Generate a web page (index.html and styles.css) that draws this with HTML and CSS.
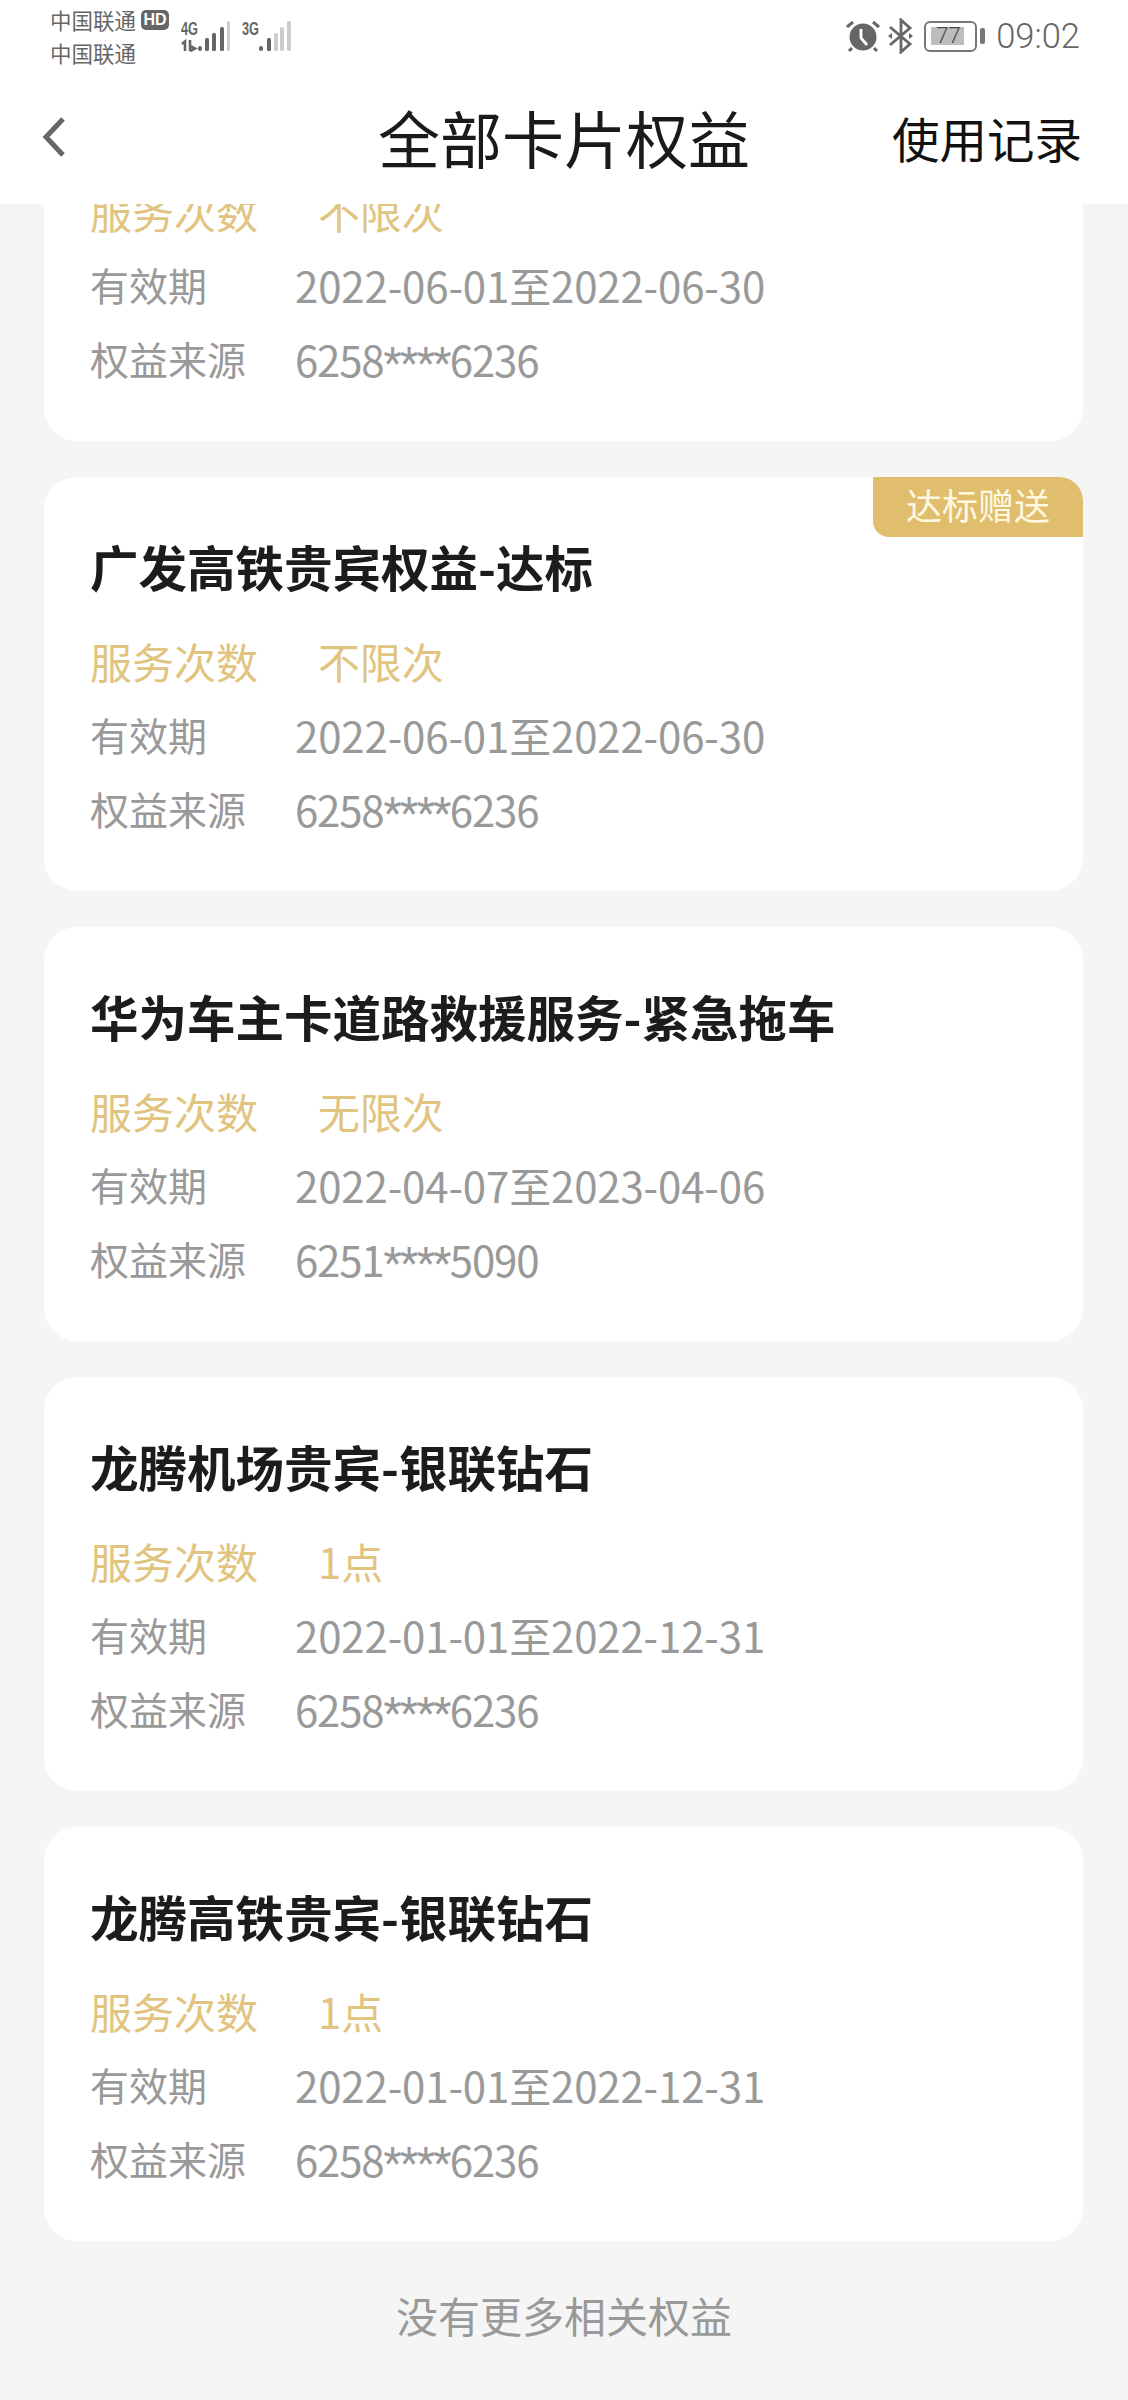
FILE: index.html
```html
<!DOCTYPE html>
<html lang="zh-CN">

<head>
    <meta charset="UTF-8">
    <meta name="viewport" content="width=device-width, initial-scale=1.0">
    <title>全部卡片权益</title>
    <link rel="stylesheet" href="styles.css">
</head>

<body>
    <div class="top">
        <!-- 状态栏 -->
        <div class="status">
            <div class="carrier">
                <div class="carrier-line">中国联通<span class="hd">HD</span></div>
                <div class="carrier-line">中国联通</div>
            </div>
            <svg class="signal" width="50" height="34" viewBox="0 0 50 34">
                <text class="signal-text" x="1" y="15" textLength="17" lengthAdjust="spacingAndGlyphs">4G</text>
                <path d="M2 24l3-2.500V31M10 20v11M10 26l5 2.500-5 2.500" fill="none" stroke="#666" stroke-width="2.600"/>
                <rect x="18" y="26" width="4" height="5" rx="2" fill="#666"/>
                <rect x="25" y="18" width="4" height="13" rx="1.500" fill="#666"/>
                <rect x="32" y="13" width="4" height="18" rx="1.500" fill="#666"/>
                <rect x="40" y="7" width="4" height="24" rx="1.500" fill="#666"/>
                <rect x="47" y="1" width="3" height="30" rx="1.500" fill="#ccc"/>
            </svg>
            <svg class="signal signal-second" width="50" height="34" viewBox="0 0 50 34">
                <text class="signal-text" x="0" y="15" textLength="17" lengthAdjust="spacingAndGlyphs">3G</text>
                <rect x="17" y="26" width="4" height="5" rx="2" fill="#666"/>
                <rect x="25" y="18" width="4" height="13" rx="1.500" fill="#666"/>
                <rect x="32" y="13" width="4" height="18" rx="1.500" fill="#ccc"/>
                <rect x="38" y="7" width="4" height="24" rx="1.500" fill="#ccc"/>
                <rect x="45" y="1" width="4" height="30" rx="1.500" fill="#ccc"/>
            </svg>
            <div class="status-right">
                <svg width="34" height="34" viewBox="0 0 34 34">
                    <circle cx="17" cy="18" r="13.500" fill="#666"/>
                    <path d="M15 10v9l6 7" fill="none" stroke="#fff" stroke-width="2.800"/>
                    <path d="M1 8l6-5M33 8l-6-5M6 29l-3 3M28 29l3 3" fill="none" stroke="#666" stroke-width="3"/>
                </svg>
                <svg class="bluetooth" width="25" height="36" viewBox="0 0 25 36">
                    <path d="M2 9l20 17-9 8V2l9 8L2 27" fill="none" stroke="#666" stroke-width="2.800"/>
                    <path d="M0 18l4-3v6zM25 18l-4-3v6z" fill="#666"/>
                </svg>
                <div class="battery">
                    <div class="battery-box">
                        <div class="battery-level"></div>
                        <span class="battery-num">77</span>
                    </div>
                    <div class="battery-nub"></div>
                </div>
                <div class="time">09:02</div>
            </div>
        </div>
        <!-- 标题栏 -->
        <div class="nav">
            <svg class="back" width="24" height="42" viewBox="0 0 24 42">
                <path d="M21 3L4 21l17 18" fill="none" stroke="#666" stroke-width="5"/>
            </svg>
            <div class="nav-title">全部卡片权益</div>
            <div class="nav-link">使用记录</div>
        </div>
    </div>

    <div class="list">
        <!-- 第一张被标题栏盖住上半部分 -->
        <div class="card card-cut">
            <div class="row row-gold"><span class="label">服务次数</span><span class="value">不限次</span></div>
            <div class="row"><span class="label">有效期</span><span class="value">2022-06-01至2022-06-30</span></div>
            <div class="row"><span class="label">权益来源</span><span class="value num">6258<span class="mask">****</span>6236</span></div>
        </div>
        <div class="card">
            <div class="tag">达标赠送</div>
            <div class="card-title">广发高铁贵宾权益-达标</div>
            <div class="row row-gold"><span class="label">服务次数</span><span class="value">不限次</span></div>
            <div class="row"><span class="label">有效期</span><span class="value">2022-06-01至2022-06-30</span></div>
            <div class="row"><span class="label">权益来源</span><span class="value num">6258<span class="mask">****</span>6236</span></div>
        </div>
        <div class="card">
            <div class="card-title">华为车主卡道路救援服务-紧急拖车</div>
            <div class="row row-gold"><span class="label">服务次数</span><span class="value">无限次</span></div>
            <div class="row"><span class="label">有效期</span><span class="value">2022-04-07至2023-04-06</span></div>
            <div class="row"><span class="label">权益来源</span><span class="value num">6251<span class="mask">****</span>5090</span></div>
        </div>
        <div class="card">
            <div class="card-title">龙腾机场贵宾-银联钻石</div>
            <div class="row row-gold"><span class="label">服务次数</span><span class="value">1点</span></div>
            <div class="row"><span class="label">有效期</span><span class="value">2022-01-01至2022-12-31</span></div>
            <div class="row"><span class="label">权益来源</span><span class="value num">6258<span class="mask">****</span>6236</span></div>
        </div>
        <div class="card">
            <div class="card-title">龙腾高铁贵宾-银联钻石</div>
            <div class="row row-gold"><span class="label">服务次数</span><span class="value">1点</span></div>
            <div class="row"><span class="label">有效期</span><span class="value">2022-01-01至2022-12-31</span></div>
            <div class="row"><span class="label">权益来源</span><span class="value num">6258<span class="mask">****</span>6236</span></div>
        </div>
    </div>
    <div class="no-more">没有更多相关权益</div>
</body>

</html>
```

FILE: styles.css
```css
* {
    margin: 0;
    padding: 0;
    box-sizing: border-box;
}

body {
    height: 2400px;
    overflow: hidden;
    background-color: #f5f5f5;
    font-family: "Noto Sans CJK SC", "Noto Sans", sans-serif;
}

.top {
    height: 204px;
    background-color: #fff;
}

.status {
    display: flex;
    align-items: flex-start;
    height: 72px;
    padding: 3px 48px 0 50px;
    color: #666;
}

.carrier {
    width: 130px;
    font-size: 21.5px;
    line-height: 33px;
}

.carrier-line {
    display: flex;
    align-items: center;
    white-space: nowrap;
}

.hd {
    display: inline-block;
    width: 28px;
    height: 20px;
    margin-left: 5px;
    border-radius: 5px;
    background-color: #666;
    color: #fff;
    font-family: "Liberation Sans", sans-serif;
    font-size: 16px;
    font-weight: 700;
    line-height: 20px;
    text-align: center;
}

.signal {
    margin-top: 17px;
    overflow: visible;
}

.signal-second {
    margin-left: 12px;
}

.signal-text {
    fill: #666;
    font-family: "Liberation Sans", sans-serif;
    font-size: 19px;
    font-weight: 700;
}

.status-right {
    display: flex;
    align-items: center;
    margin-left: auto;
    height: 36px;
    margin-top: 15px;
}

.bluetooth {
    margin-left: 8px;
}

.battery {
    display: flex;
    align-items: center;
    margin-left: 11px;
}

.battery-box {
    position: relative;
    width: 53px;
    height: 31px;
    padding: 4px 5px;
    border: 2.5px solid #777;
    border-radius: 6px;
}

.battery-level {
    width: 33px;
    height: 18px;
    background-color: #bdbdbd;
}

.battery-num {
    position: absolute;
    left: 10px;
    top: 0;
    font-family: "Roboto", sans-serif;
    font-size: 22px;
    font-weight: 300;
    line-height: 26px;
    color: #444;
}

.battery-nub {
    width: 5px;
    height: 16px;
    margin-left: 3px;
    border-radius: 2px;
    background-color: #777;
}

.time {
    margin-left: 11px;
    font-family: "Roboto", sans-serif;
    font-size: 34.5px;
    font-weight: 300;
    line-height: 36px;
}

.nav {
    display: grid;
    grid-template-columns: 1fr auto 1fr;
    align-items: center;
    height: 132px;
    padding: 0 46px 2px;
}

.back {
    margin-left: -4px;
}

.nav-title {
    font-size: 62px;
    color: #1a1a1a;
}

.nav-link {
    justify-self: end;
    font-size: 47.5px;
    color: #111;
}

.list {
    padding: 0 45px 0 44px;
}

.card {
    position: relative;
    height: 414px;
    margin-bottom: 36px;
    padding: 53px 46px 0;
    border-radius: 33px;
    background-color: #fff;
}

/* 只露出下半部分 */
.card-cut {
    height: 237px;
    padding-top: 0;
    border-radius: 0 0 33px 33px;
    overflow: hidden;
}

.card-cut .row-gold {
    margin-top: -31px;
}

.card-title {
    margin-bottom: 21px;
    font-size: 48.5px;
    font-weight: 700;
    line-height: 72px;
    color: #1c1c1c;
}

.row {
    display: flex;
    align-items: center;
    height: 74px;
    font-size: 42px;
    color: #999;
}

.row .label {
    width: 205px;
    font-size: 39px;
}

.row .value {
    letter-spacing: -0.15px;
}

/* 卡号的数字比日期窄一点 */
.row .num {
    letter-spacing: -1.2px;
}

.row .mask {
    font-family: "Roboto", sans-serif;
    letter-spacing: -1.5px;
}

.row-gold {
    color: #e0c47f;
}

.row-gold .label {
    width: 228px;
    font-size: 42px;
}

.tag {
    position: absolute;
    right: 0;
    top: 0;
    width: 210px;
    height: 60px;
    border-radius: 0 24px 0 16px;
    background-color: #e0be6e;
    color: #fff8e1;
    font-size: 36px;
    line-height: 54px;
    text-align: center;
}

.no-more {
    margin-top: 44px;
    font-size: 42px;
    line-height: 60px;
    text-align: center;
    color: #999;
}
```
